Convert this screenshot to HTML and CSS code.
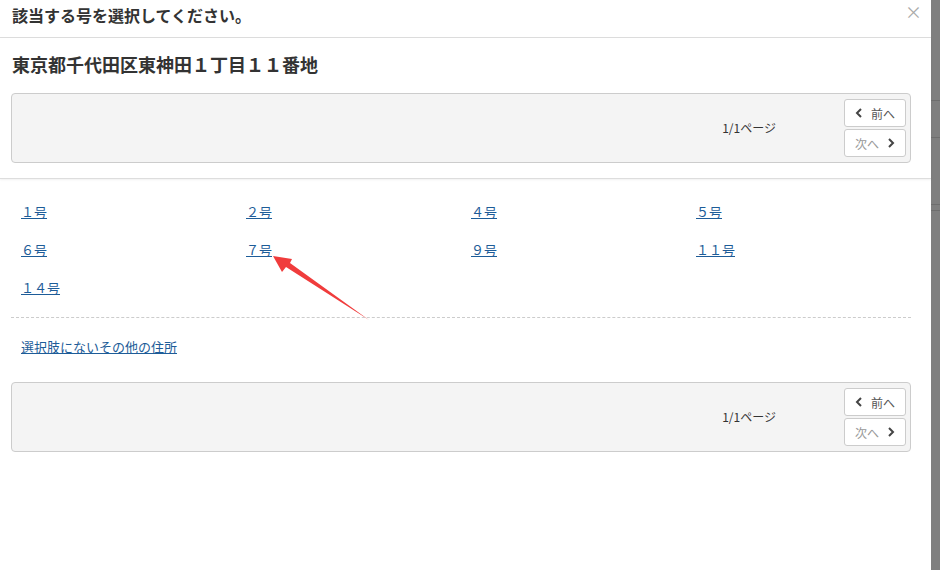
FILE: index.html
```html
<!DOCTYPE html>
<html lang="ja">
<head>
    <meta charset="UTF-8">
    <title>号の選択</title>
    <link rel="stylesheet" href="styles.css">
</head>
<body>
    <div class="modal">
        <div class="modal-header">
            <h2>該当する号を選択してください。</h2>
            <span class="close">×</span>
        </div>

        <div class="address-section">
            <h3>東京都千代田区東神田１丁目１１番地</h3>
            <div class="pager">
                <span class="pager-info">1/1ページ</span>
                <div class="pager-buttons">
                    <button class="pg-btn">
                        <svg width="8" height="10" viewBox="0 0 8 10"><polyline points="6,1 2,5 6,9" /></svg>
                        前へ
                    </button>
                    <button class="pg-btn next">
                        次へ
                        <svg width="8" height="10" viewBox="0 0 8 10"><polyline points="2,1 6,5 2,9" /></svg>
                    </button>
                </div>
            </div>
        </div>

        <div class="list-section">
            <div class="go-grid">
                <a href="#">１号</a>
                <a href="#">２号</a>
                <a href="#">４号</a>
                <a href="#">５号</a>
                <a href="#">６号</a>
                <a href="#">７号</a>
                <a href="#">９号</a>
                <a href="#">１１号</a>
                <a href="#">１４号</a>
            </div>
            <div class="other">
                <a href="#">選択肢にないその他の住所</a>
            </div>
            <div class="pager">
                <span class="pager-info">1/1ページ</span>
                <div class="pager-buttons">
                    <button class="pg-btn">
                        <svg width="8" height="10" viewBox="0 0 8 10"><polyline points="6,1 2,5 6,9" /></svg>
                        前へ
                    </button>
                    <button class="pg-btn next">
                        次へ
                        <svg width="8" height="10" viewBox="0 0 8 10"><polyline points="2,1 6,5 2,9" /></svg>
                    </button>
                </div>
            </div>
        </div>

        <!-- annotation arrow -->
        <svg class="arrow" width="931" height="570" viewBox="0 0 931 570">
            <polygon points="273,256 282,272 286,267 369,320 290,263 292,259" />
        </svg>
    </div>
    <div class="backdrop">
        <span class="bd-line l1"></span>
        <span class="bd-line l2"></span>
        <span class="bd-line l3"></span>
        <span class="bd-line l4"></span>
    </div>
</body>
</html>
```

FILE: styles.css
```css
* {
    margin: 0;
    padding: 0;
    box-sizing: border-box;
}
body {
    display: flex;
    width: 940px;
    height: 570px;
    overflow: hidden;
    background: #7f7f7f;
    font-family: "Noto Sans CJK JP", "Liberation Sans", sans-serif;
    color: #333;
}
.modal {
    position: relative;
    width: 931px;
    height: 570px;
    background: #fff;
    flex-shrink: 0;
}
.modal-header {
    display: flex;
    justify-content: space-between;
    height: 38px;
    padding: 4px 9px 0 12px;
    border-bottom: 1px solid #ddd;
}
.modal-header h2 {
    font-size: 16px;
    line-height: 22px;
    font-weight: bold;
    color: #333;
}
.close {
    font-size: 17px;
    line-height: 16px;
    color: #aaa;
}
.address-section {
    padding: 13px 20px 15px 11px;
    border-bottom: 1px solid #ddd;
    box-shadow: 0 1px 2px rgba(0, 0, 0, 0.06);
}
.address-section h3 {
    font-size: 18px;
    line-height: 26px;
    font-weight: bold;
    color: #333;
    padding-left: 1px;
    margin-bottom: 16px;
}
.pager {
    display: flex;
    justify-content: flex-end;
    align-items: center;
    height: 70px;
    padding-right: 4px;
    background: #f4f4f4;
    border: 1px solid #ccc;
    border-radius: 4px;
}
.pager-info {
    font-size: 12px;
    color: #333;
    margin-right: 68px;
    margin-bottom: 2px;
}
.pager-buttons {
    display: flex;
    flex-direction: column;
    gap: 2px;
}
.pg-btn {
    display: flex;
    align-items: center;
    justify-content: center;
    gap: 8px;
    width: 62px;
    height: 28px;
    background: #fff;
    border: 1px solid #ccc;
    border-radius: 3px;
    font-family: inherit;
    font-size: 12px;
    color: #555;
}
.pg-btn.next {
    color: #999;
}
.pg-btn svg polyline {
    fill: none;
    stroke: #444;
    stroke-width: 2;
}
.list-section {
    padding: 13px 20px 0 11px;
}
.go-grid {
    display: grid;
    grid-template-columns: repeat(4, 225px);
    grid-auto-rows: 38px;
    align-items: center;
    padding-left: 10px;
    padding-bottom: 11px;
    border-bottom: 1px dashed #ccc;
}
.go-grid a, .other a {
    font-size: 13px;
    color: #1d5c98;
    text-decoration: underline;
    justify-self: start;
}
.other {
    padding: 18px 0 26px 10px;
    line-height: 18px;
}
.arrow {
    position: absolute;
    left: 0;
    top: 0;
    pointer-events: none;
}
.arrow polygon {
    fill: #f03c3c;
}
.backdrop {
    position: relative;
    flex: 1;
}
.bd-line {
    position: absolute;
    left: 0;
    right: 0;
    height: 1px;
    background: #6e6e6e;
}
.l1 { top: 100px; }
.l2 { top: 137px; }
.l3 { top: 204px; }
.l4 { top: 210px; }
```
